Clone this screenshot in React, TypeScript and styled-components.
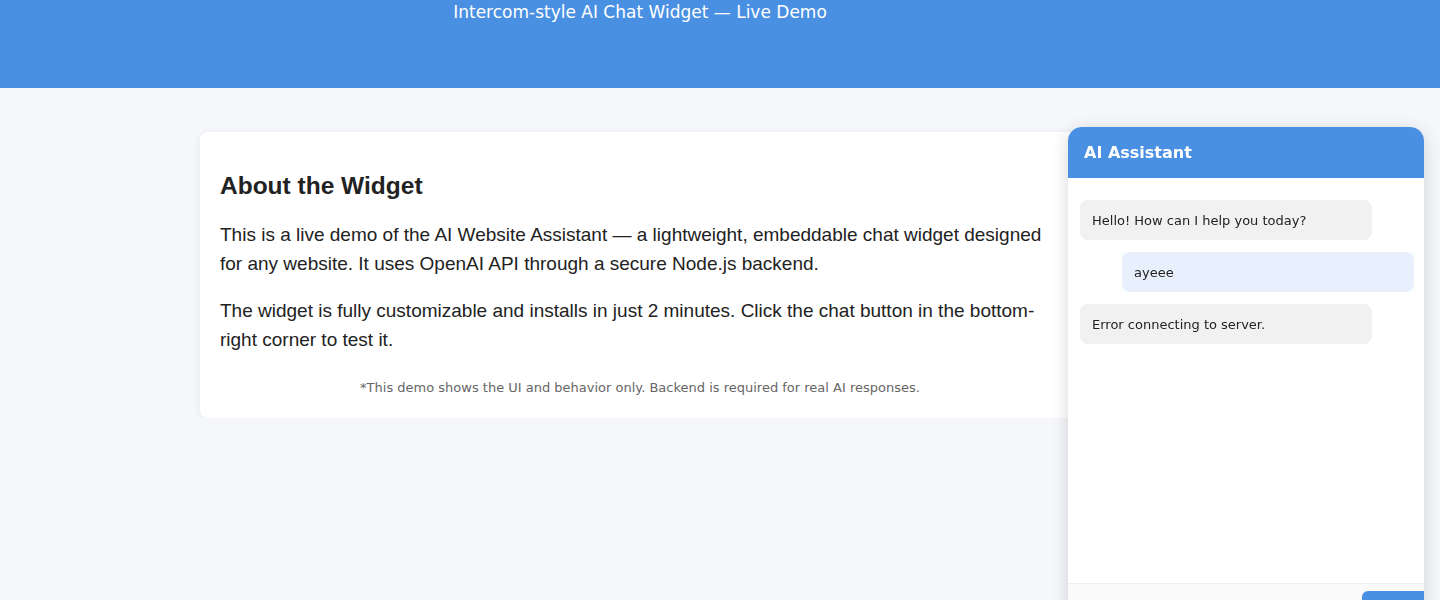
import React from "react";
import styled, { createGlobalStyle } from "styled-components";

const GlobalStyle = createGlobalStyle`
  html, body { margin: 0; padding: 0; }
  body {
    background: #f5f7fa;
    font-family: "DejaVu Sans", "Liberation Sans", Arial, sans-serif;
    color: #222;
  }
`;

const Header = styled.header`
  background: #4a90e2;
  height: 88px;
  width: 100%;
`;

const HeaderInner = styled.div`
  width: 1280px;
  text-align: center;
`;

const Title = styled.h1`
  margin: 0;
  font-size: 17px;
  line-height: 24px;
  font-weight: 400;
  color: #ffffff;
`;

const Main = styled.main`
  width: 1280px;
  display: flex;
  justify-content: center;
  padding-top: 44px;
`;

const Card = styled.section`
  width: 880px;
  box-sizing: border-box;
  background: #ffffff;
  border-radius: 8px;
  box-shadow: 0 2px 10px rgba(0, 0, 0, 0.07);
  padding: 40px 20px 20px;
  font-family: "Liberation Sans", Arial, sans-serif;
`;

const Heading = styled.h2`
  margin: 0 0 20px;
  font-size: 24.5px;
  line-height: 28px;
  font-weight: 700;
  color: #222;
`;

const Para = styled.p`
  margin: 0 0 18px;
  font-size: 19px;
  line-height: 29px;
  color: #222;
`;

const Note = styled.p`
  margin: 24px 0 0;
  text-align: center;
  font-family: "DejaVu Sans", sans-serif;
  font-size: 13px;
  line-height: 20px;
  color: #666;
`;

const Widget = styled.aside`
  position: fixed;
  top: 127px;
  right: 16px;
  width: 356px;
  height: 520px;
  background: #ffffff;
  border-radius: 14px;
  box-shadow: 0 4px 18px rgba(0, 0, 0, 0.16);
  display: flex;
  flex-direction: column;
  overflow: hidden;
`;

const WidgetHeader = styled.div`
  background: #4a90e2;
  height: 51px;
  display: flex;
  align-items: center;
  padding: 0 16px;
  color: #fff;
  font-weight: 700;
  font-size: 16px;
`;

const Messages = styled.div`
  flex: 1;
  display: flex;
  flex-direction: column;
  gap: 12px;
  padding: 22px 10px 12px 12px;
`;

const Bubble = styled.div<{ $user?: boolean }>`
  width: 292px;
  box-sizing: border-box;
  height: 40px;
  display: flex;
  align-items: center;
  padding: 0 12px;
  border-radius: 8px;
  font-size: 13px;
  color: #222;
  background: ${(p) => (p.$user ? "#e8f0fe" : "#f1f1f1")};
  align-self: ${(p) => (p.$user ? "flex-end" : "flex-start")};
`;

const InputRow = styled.div`
  display: flex;
  gap: 8px;
  border-top: 1px solid #eeeeee;
  padding: 7px 0 0 0;
  height: 64px;
  box-sizing: border-box;
  background: #fafafa;
`;

const Input = styled.input`
  flex: 1;
  border: none;
  background: #fafafa;
  font-family: inherit;
  font-size: 14px;
  padding: 0 12px;
  outline: none;
`;

const SendButton = styled.button`
  width: 62px;
  height: 50px;
  border: none;
  border-radius: 6px 0 0 6px;
  background: #4a90e2;
  color: #fff;
  font-family: inherit;
  font-size: 14px;
  padding-top: 12px;
`;

export default function App() {
  return (
    <>
      <GlobalStyle />
      <Header>
        <HeaderInner>
          <Title>Intercom-style AI Chat Widget — Live Demo</Title>
        </HeaderInner>
      </Header>
      <Main>
        <Card>
          <Heading>About the Widget</Heading>
          <Para>
            This is a live demo of the AI Website Assistant — a lightweight, embeddable chat widget designed
            for any website. It uses OpenAI API through a secure Node.js backend.
          </Para>
          <Para>
            The widget is fully customizable and installs in just 2 minutes. Click the chat button in the bottom-right
            corner to test it.
          </Para>
          <Note>*This demo shows the UI and behavior only. Backend is required for real AI responses.</Note>
        </Card>
      </Main>
      <Widget>
        <WidgetHeader>AI Assistant</WidgetHeader>
        <Messages>
          <Bubble>Hello! How can I help you today?</Bubble>
          <Bubble $user>ayeee</Bubble>
          <Bubble>Error connecting to server.</Bubble>
        </Messages>
        <InputRow>
          <Input placeholder="" />
          <SendButton>Send</SendButton>
        </InputRow>
      </Widget>
    </>
  );
}
